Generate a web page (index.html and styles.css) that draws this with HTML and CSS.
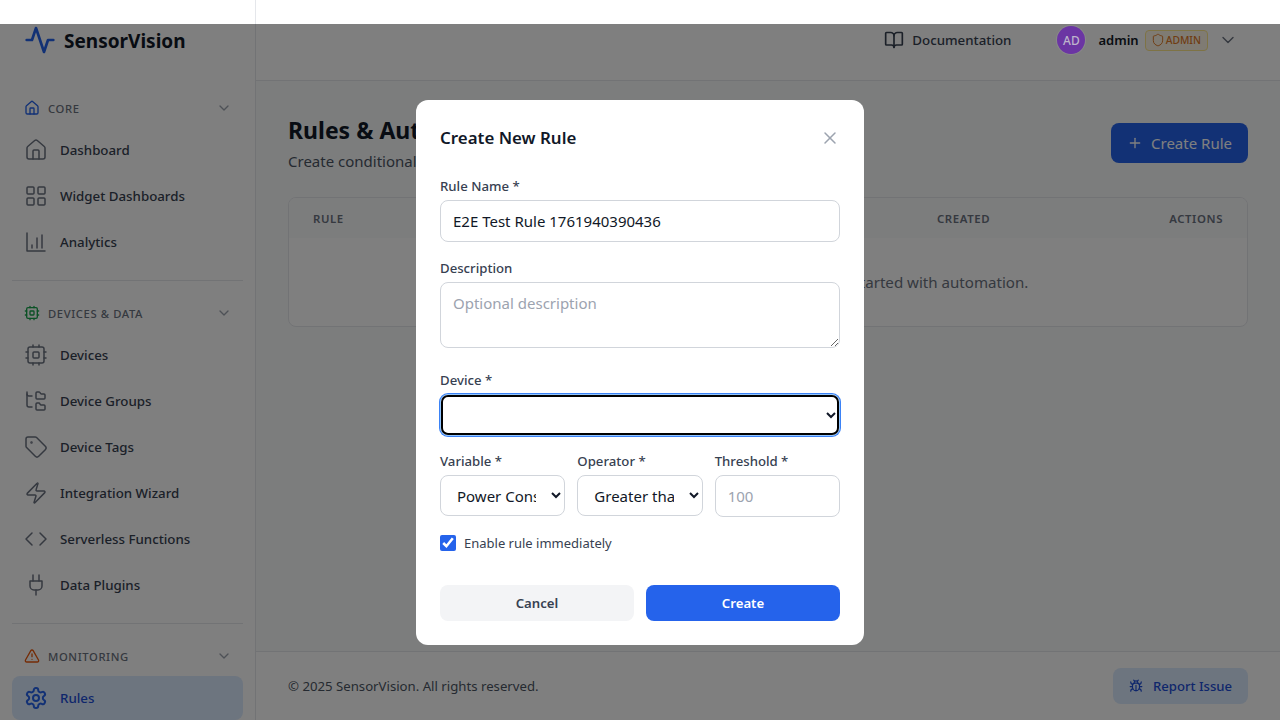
FILE: index.html
```html
<!DOCTYPE html>
<html lang="en">
<head>
<meta charset="utf-8">
<title>SensorVision - Rules</title>
<link rel="stylesheet" href="styles.css">
</head>
<body>
<svg class="sprite" aria-hidden="true">
  <defs>
    <symbol id="i-activity" viewBox="0 0 24 24"><path d="M22 12h-4l-3 9L9 3l-3 9H2"/></symbol>
    <symbol id="i-home" viewBox="0 0 24 24"><path d="M15 21v-8a1 1 0 0 0-1-1h-4a1 1 0 0 0-1 1v8"/><path d="M3 10a2 2 0 0 1 .709-1.528l7-5.999a2 2 0 0 1 2.582 0l7 5.999A2 2 0 0 1 21 10v9a2 2 0 0 1-2 2H5a2 2 0 0 1-2-2z"/></symbol>
    <symbol id="i-grid" viewBox="0 0 24 24"><rect x="3" y="3" width="7" height="7" rx="1"/><rect x="14" y="3" width="7" height="7" rx="1"/><rect x="14" y="14" width="7" height="7" rx="1"/><rect x="3" y="14" width="7" height="7" rx="1"/></symbol>
    <symbol id="i-chart" viewBox="0 0 24 24"><path d="M3 3v18h18"/><path d="M8 18v-3"/><path d="M13 18V8"/><path d="M18 18V5"/></symbol>
    <symbol id="i-cpu" viewBox="0 0 24 24"><rect x="4" y="4" width="16" height="16" rx="2"/><rect x="9" y="9" width="6" height="6" rx="1"/><path d="M15 2v2M15 20v2M2 15h2M2 9h2M20 15h2M20 9h2M9 2v2M9 20v2"/></symbol>
    <symbol id="i-folders" viewBox="0 0 24 24"><path d="M20 10a1 1 0 0 0 1-1V6a1 1 0 0 0-1-1h-2.5a1 1 0 0 1-.8-.4l-.9-1.2A1 1 0 0 0 15 3h-2a1 1 0 0 0-1 1v5a1 1 0 0 0 1 1Z"/><path d="M20 21a1 1 0 0 0 1-1v-3a1 1 0 0 0-1-1h-2.9a1 1 0 0 1-.88-.55l-.42-.85a1 1 0 0 0-.92-.6H13a1 1 0 0 0-1 1v5a1 1 0 0 0 1 1Z"/><path d="M3 5a2 2 0 0 0 2 2h3"/><path d="M3 3v13a2 2 0 0 0 2 2h3"/></symbol>
    <symbol id="i-tag" viewBox="0 0 24 24"><path d="M12.586 2.586A2 2 0 0 0 11.172 2H4a2 2 0 0 0-2 2v7.172a2 2 0 0 0 .586 1.414l8.704 8.704a2.426 2.426 0 0 0 3.42 0l6.58-6.58a2.426 2.426 0 0 0 0-3.42z"/><circle cx="7.5" cy="7.5" r=".5"/></symbol>
    <symbol id="i-zap" viewBox="0 0 24 24"><path d="M4 14a1 1 0 0 1-.78-1.63l9.9-10.2a.5.5 0 0 1 .86.46l-1.92 6.02A1 1 0 0 0 13 10h7a1 1 0 0 1 .78 1.63l-9.9 10.2a.5.5 0 0 1-.86-.46l1.92-6.02A1 1 0 0 0 11 14z"/></symbol>
    <symbol id="i-code" viewBox="0 0 24 24"><path d="m16 18 6-6-6-6"/><path d="m8 6-6 6 6 6"/></symbol>
    <symbol id="i-plug" viewBox="0 0 24 24"><path d="M12 22v-5"/><path d="M9 8V2"/><path d="M15 8V2"/><path d="M18 8v5a4 4 0 0 1-4 4h-4a4 4 0 0 1-4-4V8Z"/></symbol>
    <symbol id="i-alert" viewBox="0 0 24 24"><path d="m21.73 18-8-14a2 2 0 0 0-3.48 0l-8 14A2 2 0 0 0 4 21h16a2 2 0 0 0 1.73-3"/><path d="M12 9v4"/><path d="M12 17h.01"/></symbol>
    <symbol id="i-gear" viewBox="0 0 24 24"><path d="M12.22 2h-.44a2 2 0 0 0-2 2v.18a2 2 0 0 1-1 1.73l-.43.25a2 2 0 0 1-2 0l-.15-.08a2 2 0 0 0-2.73.73l-.22.38a2 2 0 0 0 .73 2.73l.15.1a2 2 0 0 1 1 1.72v.51a2 2 0 0 1-1 1.74l-.15.09a2 2 0 0 0-.73 2.73l.22.38a2 2 0 0 0 2.73.73l.15-.08a2 2 0 0 1 2 0l.43.25a2 2 0 0 1 1 1.73V20a2 2 0 0 0 2 2h.44a2 2 0 0 0 2-2v-.18a2 2 0 0 1 1-1.73l.43-.25a2 2 0 0 1 2 0l.15.08a2 2 0 0 0 2.73-.73l.22-.39a2 2 0 0 0-.73-2.73l-.15-.08a2 2 0 0 1-1-1.74v-.5a2 2 0 0 1 1-1.74l.15-.09a2 2 0 0 0 .73-2.73l-.22-.38a2 2 0 0 0-2.73-.73l-.15.08a2 2 0 0 1-2 0l-.43-.25a2 2 0 0 1-1-1.73V4a2 2 0 0 0-2-2z"/><circle cx="12" cy="12" r="3"/></symbol>
    <symbol id="i-bug" viewBox="0 0 24 24"><path d="m8 2 1.88 1.88"/><path d="M14.12 3.88 16 2"/><path d="M9 7.13v-1a3.003 3.003 0 1 1 6 0v1"/><path d="M12 20c-3.3 0-6-2.7-6-6v-3a4 4 0 0 1 4-4h4a4 4 0 0 1 4 4v3c0 3.3-2.7 6-6 6"/><path d="M12 20v-9"/><path d="M6.53 9C4.6 8.8 3 7.1 3 5"/><path d="M6 13H2"/><path d="M3 21c0-2.1 1.7-3.9 3.8-4"/><path d="M20.97 5c0 2.1-1.6 3.8-3.5 4"/><path d="M22 13h-4"/><path d="M17.2 17c2.1.1 3.8 1.9 3.8 4"/></symbol>
    <symbol id="i-book" viewBox="0 0 24 24"><path d="M12 7v14"/><path d="M3 18a1 1 0 0 1-1-1V4a1 1 0 0 1 1-1h5a4 4 0 0 1 4 4 4 4 0 0 1 4-4h5a1 1 0 0 1 1 1v13a1 1 0 0 1-1 1h-6a3 3 0 0 0-3 3 3 3 0 0 0-3-3z"/></symbol>
    <symbol id="i-shield" viewBox="0 0 24 24"><path d="M20 13c0 5-3.5 7.5-7.66 8.95a1 1 0 0 1-.67-.01C7.5 20.5 4 18 4 13V6a1 1 0 0 1 1-1c2 0 4.5-1.2 6.24-2.72a1.17 1.17 0 0 1 1.52 0C14.51 3.81 17 5 19 5a1 1 0 0 1 1 1z"/></symbol>
    <symbol id="i-chevron" viewBox="0 0 24 24"><path d="m6 9 6 6 6-6"/></symbol>
    <symbol id="i-plus" viewBox="0 0 24 24"><path d="M5 12h14"/><path d="M12 5v14"/></symbol>
    <symbol id="i-x" viewBox="0 0 24 24"><path d="M18 6 6 18"/><path d="m6 6 12 12"/></symbol>
  </defs>
</svg>

<div class="strip"><div class="strip-side"></div></div>

<div class="app">
  <aside class="sidebar">
    <div class="brand">
      <svg class="brand-icon"><use href="#i-activity"/></svg>
      <span class="brand-name">SensorVision</span>
    </div>

    <nav class="nav">
      <section class="group">
        <div class="group-head">
          <svg class="group-icon tone-blue"><use href="#i-home"/></svg>
          <span class="group-title">Core</span>
          <svg class="group-chevron"><use href="#i-chevron"/></svg>
        </div>
        <a class="item"><svg class="item-icon"><use href="#i-home"/></svg><span>Dashboard</span></a>
        <a class="item"><svg class="item-icon"><use href="#i-grid"/></svg><span>Widget Dashboards</span></a>
        <a class="item"><svg class="item-icon"><use href="#i-chart"/></svg><span>Analytics</span></a>
      </section>

      <section class="group">
        <div class="group-head">
          <svg class="group-icon tone-green"><use href="#i-cpu"/></svg>
          <span class="group-title">Devices &amp; Data</span>
          <svg class="group-chevron"><use href="#i-chevron"/></svg>
        </div>
        <a class="item"><svg class="item-icon"><use href="#i-cpu"/></svg><span>Devices</span></a>
        <a class="item"><svg class="item-icon"><use href="#i-folders"/></svg><span>Device Groups</span></a>
        <a class="item"><svg class="item-icon"><use href="#i-tag"/></svg><span>Device Tags</span></a>
        <a class="item"><svg class="item-icon"><use href="#i-zap"/></svg><span>Integration Wizard</span></a>
        <a class="item"><svg class="item-icon"><use href="#i-code"/></svg><span>Serverless Functions</span></a>
        <a class="item"><svg class="item-icon"><use href="#i-plug"/></svg><span>Data Plugins</span></a>
      </section>

      <section class="group">
        <div class="group-head">
          <svg class="group-icon tone-orange"><use href="#i-alert"/></svg>
          <span class="group-title">Monitoring</span>
          <svg class="group-chevron"><use href="#i-chevron"/></svg>
        </div>
        <a class="item is-active"><svg class="item-icon"><use href="#i-gear"/></svg><span>Rules</span></a>
      </section>
    </nav>
  </aside>

  <div class="main">
    <header class="topbar">
      <a class="doc-link"><svg class="doc-icon"><use href="#i-book"/></svg><span>Documentation</span></a>
      <div class="user">
        <span class="avatar">AD</span>
        <span class="user-name">admin</span>
        <span class="role-badge"><svg class="role-icon"><use href="#i-shield"/></svg>ADMIN</span>
        <svg class="user-chevron"><use href="#i-chevron"/></svg>
      </div>
    </header>

    <main class="content">
      <div class="page-head">
        <div>
          <h1 class="page-title">Rules &amp; Automation</h1>
          <p class="page-sub">Create conditional rules to automate actions based on sensor data</p>
        </div>
        <button class="btn-create"><svg class="plus-icon"><use href="#i-plus"/></svg>Create Rule</button>
      </div>

      <div class="table-card">
        <div class="table-head">
          <span>Rule</span><span>Device</span><span>Condition</span><span>Status</span><span>Created</span><span class="col-end">Actions</span>
        </div>
        <div class="table-empty">No rules configured. Create your first rule to get started with automation.</div>
      </div>
    </main>

    <footer class="footer">
      <span class="copyright">© 2025 SensorVision. All rights reserved.</span>
      <button class="btn-report"><svg class="bug-icon"><use href="#i-bug"/></svg>Report Issue</button>
    </footer>
  </div>

  <div class="overlay">
    <form class="modal">
      <div class="modal-head">
        <h2 class="modal-title">Create New Rule</h2>
        <svg class="modal-close"><use href="#i-x"/></svg>
      </div>

      <div class="field">
        <label class="label">Rule Name *</label>
        <input class="control" type="text" value="E2E Test Rule 1761940390436">
      </div>
      <div class="field field-area">
        <label class="label">Description</label>
        <textarea class="control area" placeholder="Optional description"></textarea>
      </div>
      <div class="field field-device">
        <label class="label">Device *</label>
        <select class="control select-device"><option></option></select>
      </div>
      <div class="triple">
        <div>
          <label class="label">Variable *</label>
          <select class="control select-small"><option>Power Consumption</option></select>
        </div>
        <div>
          <label class="label">Operator *</label>
          <select class="control select-small"><option>Greater than</option></select>
        </div>
        <div>
          <label class="label">Threshold *</label>
          <input class="control" type="text" placeholder="100">
        </div>
      </div>
      <label class="check-row"><input class="check" type="checkbox" checked><span>Enable rule immediately</span></label>
      <div class="actions">
        <button type="button" class="btn btn-cancel">Cancel</button>
        <button type="button" class="btn btn-submit">Create</button>
      </div>
    </form>
  </div>
</div>
</body>
</html>
```

FILE: styles.css
```css
* { box-sizing: border-box; }
html, body { margin: 0; height: 100%; }
body {
  height: 720px;
  overflow: hidden;
  background: #fff;
  font-family: "Noto Sans", "Liberation Sans", sans-serif;
  color: #111827;
}
svg { fill: none; stroke: currentColor; stroke-width: 2; stroke-linecap: round; stroke-linejoin: round; flex: none; display: block; }
.sprite { position: absolute; width: 0; height: 0; }

.strip { height: 24px; background: #fff; }
.strip-side { width: 256px; height: 24px; border-right: 1px solid #e5e7eb; }

.app { position: relative; display: flex; height: 696px; overflow: hidden; background: #f9fafb; }

/* sidebar */
.sidebar { width: 256px; flex: none; background: #fff; border-right: 1px solid #e5e7eb; padding: 0 12px; }
.brand { display: flex; align-items: center; gap: 8px; height: 32px; padding-left: 12px; }
.brand-icon { width: 32px; height: 32px; color: #2563eb; }
.brand-name { margin-top: 2px; font-size: 19px; font-weight: 700; color: #111827; }
.nav { margin-top: 36px; }
.group { display: flex; flex-direction: column; gap: 2px; padding-bottom: 16px; margin-bottom: 16px; border-bottom: 1px solid #e5e7eb; }
.group:last-child { border-bottom: 0; }
.group-head { display: flex; align-items: center; gap: 8px; height: 32px; padding: 0 11px 0 12px; margin-bottom: 2px; }
.group-icon { width: 16px; height: 16px; }
.tone-blue { color: #2563eb; }
.tone-green { color: #16a34a; }
.tone-orange { color: #ea580c; }
.group-title { flex: 1; font-size: 11.25px; font-weight: 500; letter-spacing: .6px; text-transform: uppercase; color: #6b7280; }
.group-chevron { width: 16px; height: 16px; color: #9ca3af; }
.item { display: flex; align-items: center; gap: 12px; height: 44px; padding: 0 12px; border-radius: 8px; font-size: 13.3px; font-weight: 500; color: #374151; }
.item-icon { width: 24px; height: 24px; color: #6b7280; stroke-width: 1.5; }
.is-active { background: #dbeafe; color: #1d4ed8; }
.is-active .item-icon { color: #2563eb; stroke-width: 2; }

/* main column */
.main { flex: 1; min-width: 0; display: flex; flex-direction: column; }
.topbar { display: flex; justify-content: flex-end; align-items: flex-start; height: 57px; padding: 0 42px 0 32px; gap: 46px; background: #fff; border-bottom: 1px solid #e5e7eb; }
.doc-link { display: flex; align-items: center; gap: 8px; height: 32px; font-size: 13.3px; font-weight: 500; color: #374151; }
.doc-icon { width: 20px; height: 20px; }
.user { display: flex; align-items: center; height: 32px; }
.avatar { position: relative; z-index: 2; display: flex; align-items: center; justify-content: center; width: 28px; height: 28px; border-radius: 50%; background: #6b35a3; color: #bdb4cc; font-size: 12px; font-weight: 500; box-shadow: 0 0 0 1px #8a8a8a; }
.user-name { margin-left: 13px; font-size: 13px; font-weight: 600; color: #111827; }
.role-badge { display: flex; align-items: center; gap: 1px; height: 21px; margin-left: 6px; padding: 0 6px 0 5px; border: 1px solid #fde68a; border-radius: 4px; background: #fff7e6; color: #e07a28; font-size: 10.3px; font-weight: 500; }
.role-icon { width: 14px; height: 14px; stroke-width: 1.7; }
.user-chevron { width: 20px; height: 20px; margin-left: 10px; color: #6b7280; stroke-width: 1.7; }

.content { flex: 1; padding: 33px 32px 0; }
.page-head { display: flex; justify-content: space-between; align-items: flex-start; }
.page-title { margin: 0; font-size: 23px; line-height: 32px; font-weight: 700; color: #111827; }
.page-sub { margin: 3px 0 0; font-size: 15px; line-height: 24px; color: #4b5563; }
.btn-create { display: flex; align-items: center; gap: 8px; height: 40px; margin-top: 9px; padding: 0 16px; border: 0; border-radius: 8px; background: #2563eb; color: #fff; font: inherit; font-size: 15px; }
.plus-icon { width: 16px; height: 16px; }

.table-card { margin-top: 24px; height: 130px; border: 1px solid #e5e7eb; border-radius: 8px; background: #fff; overflow: hidden; }
.table-head { display: grid; grid-template-columns: repeat(4, 156px) 1fr auto; align-items: center; height: 40px; padding: 0 24px; background: #f9fafb; font-size: 11.4px; font-weight: 600; letter-spacing: .6px; text-transform: uppercase; color: #6b7280; }
.col-end { text-align: right; }
.table-empty { padding-top: 32px; text-align: center; font-size: 15.1px; line-height: 24px; color: #6b7280; }

.footer { display: flex; justify-content: space-between; align-items: center; height: 69px; padding: 0 32px; background: #fff; border-top: 1px solid #e5e7eb; }
.copyright { font-size: 13.2px; color: #4b5563; }
.btn-report { display: flex; align-items: center; gap: 10px; height: 36px; padding: 0 16px; border: 0; border-radius: 8px; background: #dbeafe; color: #1d4ed8; font: inherit; font-size: 13.1px; font-weight: 500; }
.bug-icon { width: 14px; height: 14px; }

/* modal */
.overlay { position: absolute; z-index: 1; inset: 0; display: flex; align-items: center; justify-content: center; background: rgba(0, 0, 0, .5); }
.modal { width: 448px; padding: 24px; border-radius: 12px; background: #fff; }
.modal-head { display: flex; justify-content: space-between; align-items: center; margin-bottom: 24px; }
.modal-title { margin: 0; font-size: 16.9px; line-height: 28px; font-weight: 600; color: #111827; }
.modal-close { width: 20px; height: 20px; color: #9ca3af; stroke-width: 1.8; }
.label { display: block; margin-bottom: 4px; font-size: 13.2px; line-height: 20px; font-weight: 500; color: #374151; }
.field { margin-bottom: 16px; }
.field-area { margin-bottom: 22px; }
.field-device { margin-bottom: 15px; }
.control { display: block; width: 100%; height: 42px; padding: 8px 12px; border: 1px solid #d1d5db; border-radius: 8px; background: #fff; color: #111827; font: inherit; font-size: 15px; }
.control::placeholder { color: #9ca3af; }
.area { height: 66px; padding-top: 10px; resize: vertical; }
.select-device { border-color: #93c5fd; box-shadow: 0 0 0 1px #3b82f6; outline: 2px solid #000; outline-offset: -3px; }
.select-small { height: 41px; padding: 9px 12px 7px; }
.triple { display: grid; grid-template-columns: repeat(3, 1fr); gap: 12px; align-items: start; margin-bottom: 16px; }
.check-row { display: flex; align-items: center; gap: 8px; height: 20px; font-size: 13px; color: #374151; }
.check { width: 16px; height: 16px; margin: 0; accent-color: #2563eb; }
.actions { display: grid; grid-template-columns: 1fr 1fr; gap: 12px; margin-top: 32px; }
.btn { height: 36px; border: 0; border-radius: 8px; font: inherit; font-size: 13.2px; font-weight: 600; }
.btn-cancel { background: #f3f4f6; color: #374151; }
.btn-submit { background: #2563eb; color: #fff; }
```
